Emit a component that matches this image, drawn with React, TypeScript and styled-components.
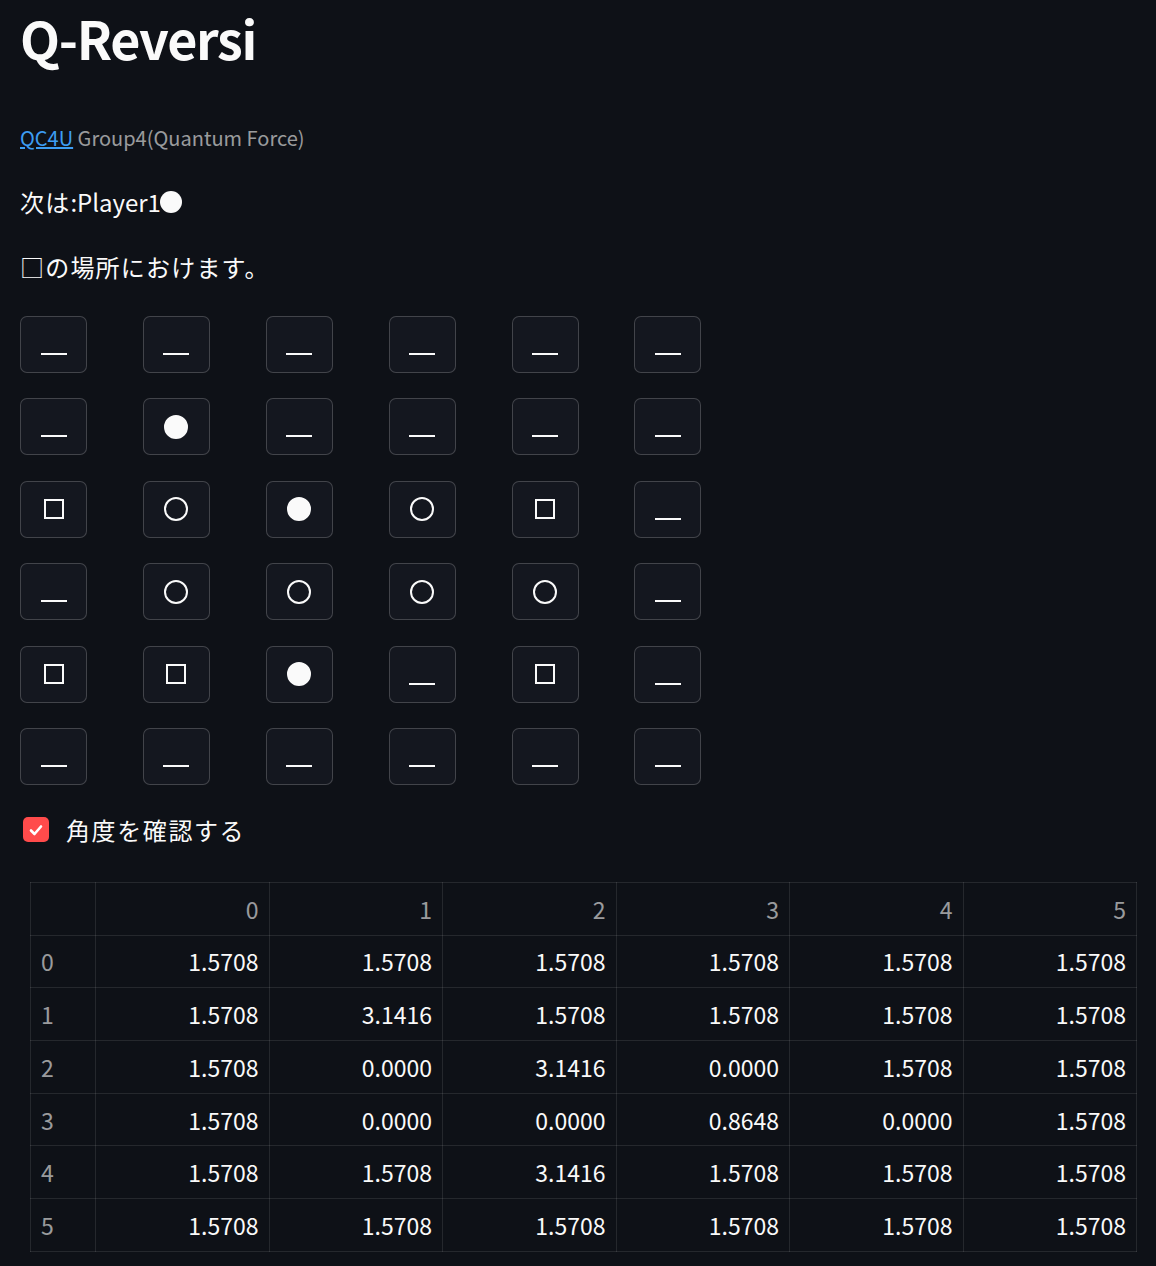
import React from "react";
import styled, { createGlobalStyle } from "styled-components";

const Global = createGlobalStyle`
  html, body { margin: 0; padding: 0; background: #0e1117; }
  body { font-family: "Noto Sans CJK JP", "Noto Sans", sans-serif; color: #fafafa; }
`;

const Page = styled.div`
  padding: 0 20px;
  min-height: 1266px;
  box-sizing: border-box;
  display: flex;
  flex-direction: column;
  align-items: flex-start;
`;

const Title = styled.h1`
  margin: 0;
  padding-top: 6px;
  font-size: 52px;
  line-height: 64px;
  font-weight: 700;
  letter-spacing: -1.3px;
  color: #fafafa;
`;

const Caption = styled.div`
  margin-top: 52px;
  font-size: 20px;
  line-height: 31px;
  color: rgba(250, 250, 250, 0.6);
`;

const Link = styled.a`
  color: #3d9df3;
  text-decoration: underline;
`;

const Para = styled.p<{ $top: number }>`
  margin: ${(p) => p.$top}px 0 0;
  font-size: 24px;
  line-height: 36px;
  display: flex;
  align-items: center;
`;

const Jp = styled.span`
  letter-spacing: 1.2px;
`;

const Dot = styled.span`
  display: inline-block;
  width: 22px;
  height: 22px;
  margin-left: -1px;
  border-radius: 50%;
  background: #fafafa;
  color: transparent;
  font-size: 1px;
  overflow: hidden;
`;

const Board = styled.div`
  margin-top: 31px;
  display: grid;
  grid-template-columns: repeat(6, 98.9px);
  column-gap: 24px;
  row-gap: 25.4px;
`;

const Cell = styled.button`
  width: 67px;
  height: 57px;
  box-sizing: border-box;
  padding: 0;
  border: 1px solid rgba(250, 250, 250, 0.2);
  border-radius: 7px;
  background: #14171f;
  color: #fafafa;
  font-family: "Noto Sans CJK JP", sans-serif;
  font-size: 24px;
  display: flex;
  align-items: center;
  justify-content: center;
  cursor: pointer;
`;

const Line = styled.span`
  display: block;
  width: 26px;
  height: 2px;
  background: #fafafa;
  margin-top: 19px;
`;

const Square = styled.span`
  display: block;
  width: 16px;
  height: 16px;
  border: 2px solid #fafafa;
`;

const Ring = styled.span<{ $filled?: boolean }>`
  display: block;
  width: 24px;
  height: 24px;
  box-sizing: border-box;
  border-radius: 50%;
  border: 2px solid #fafafa;
  background: ${(p) => (p.$filled ? "#fafafa" : "transparent")};
`;

const CheckRow = styled.label`
  margin-top: 27px;
  display: flex;
  align-items: center;
  gap: 17px;
  padding-left: 3px;
  font-size: 24px;
  line-height: 36px;
  letter-spacing: 1.6px;
`;

const Box = styled.span`
  width: 26px;
  height: 25px;
  border-radius: 5px;
  background: #ff4b4b;
  display: flex;
  align-items: center;
  justify-content: center;
`;

const Table = styled.table`
  margin-top: 34px;
  margin-left: 10px;
  width: 1107px;
  border-collapse: collapse;
  table-layout: fixed;
  font-size: 23px;
`;

const Th = styled.th<{ $index?: boolean }>`
  height: 52.7px;
  padding: 0 10px;
  border: 1px solid rgba(250, 250, 250, 0.1);
  color: rgba(250, 250, 250, 0.6);
  font-weight: 400;
  text-align: ${(p) => (p.$index ? "left" : "right")};
  box-sizing: border-box;
`;

const Td = styled.td`
  height: 52.7px;
  padding: 0 10px;
  border: 1px solid rgba(250, 250, 250, 0.1);
  color: #fafafa;
  text-align: right;
  box-sizing: border-box;
`;

type Piece = "_" | "sq" | "o" | "x";

const board: Piece[][] = [
  ["_", "_", "_", "_", "_", "_"],
  ["_", "x", "_", "_", "_", "_"],
  ["sq", "o", "x", "o", "sq", "_"],
  ["_", "o", "o", "o", "o", "_"],
  ["sq", "sq", "x", "_", "sq", "_"],
  ["_", "_", "_", "_", "_", "_"],
];

const angles: string[][] = [
  ["1.5708", "1.5708", "1.5708", "1.5708", "1.5708", "1.5708"],
  ["1.5708", "3.1416", "1.5708", "1.5708", "1.5708", "1.5708"],
  ["1.5708", "0.0000", "3.1416", "0.0000", "1.5708", "1.5708"],
  ["1.5708", "0.0000", "0.0000", "0.8648", "0.0000", "1.5708"],
  ["1.5708", "1.5708", "3.1416", "1.5708", "1.5708", "1.5708"],
  ["1.5708", "1.5708", "1.5708", "1.5708", "1.5708", "1.5708"],
];

function Glyph({ p }: { p: Piece }) {
  if (p === "_") return <Line />;
  if (p === "sq") return <Square />;
  if (p === "o") return <Ring />;
  return <Ring $filled />;
}

export default function App() {
  return (
    <>
      <Global />
      <Page>
        <Title>Q-Reversi</Title>
        <Caption>
          <Link href="#">QC4U</Link> Group4(Quantum Force)
        </Caption>
        <Para $top={31}>
          <Jp>次は</Jp>:Player1<Dot>⚪</Dot>
        </Para>
        <Para $top={29}>
          <Jp>□の場所におけます。</Jp>
        </Para>
        <Board>
          {board.flatMap((row, r) =>
            row.map((p, c) => (
              <Cell key={`${r}-${c}`}>
                <Glyph p={p} />
              </Cell>
            ))
          )}
        </Board>
        <CheckRow>
          <Box>
            <svg width="16" height="16" viewBox="0 0 16 16">
              <path d="M3 8.5 L6.5 12 L13 4.5" stroke="#fff" strokeWidth="2.6" fill="none" strokeLinecap="round" strokeLinejoin="round" />
            </svg>
          </Box>
          角度を確認する
        </CheckRow>
        <Table>
          <colgroup>
            <col style={{ width: 65 }} />
            {[0, 1, 2, 3, 4, 5].map((i) => (
              <col key={i} />
            ))}
          </colgroup>
          <thead>
            <tr>
              <Th $index></Th>
              {[0, 1, 2, 3, 4, 5].map((i) => (
                <Th key={i}>{i}</Th>
              ))}
            </tr>
          </thead>
          <tbody>
            {angles.map((row, r) => (
              <tr key={r}>
                <Th $index>{r}</Th>
                {row.map((v, c) => (
                  <Td key={c}>{v}</Td>
                ))}
              </tr>
            ))}
          </tbody>
        </Table>
      </Page>
    </>
  );
}
